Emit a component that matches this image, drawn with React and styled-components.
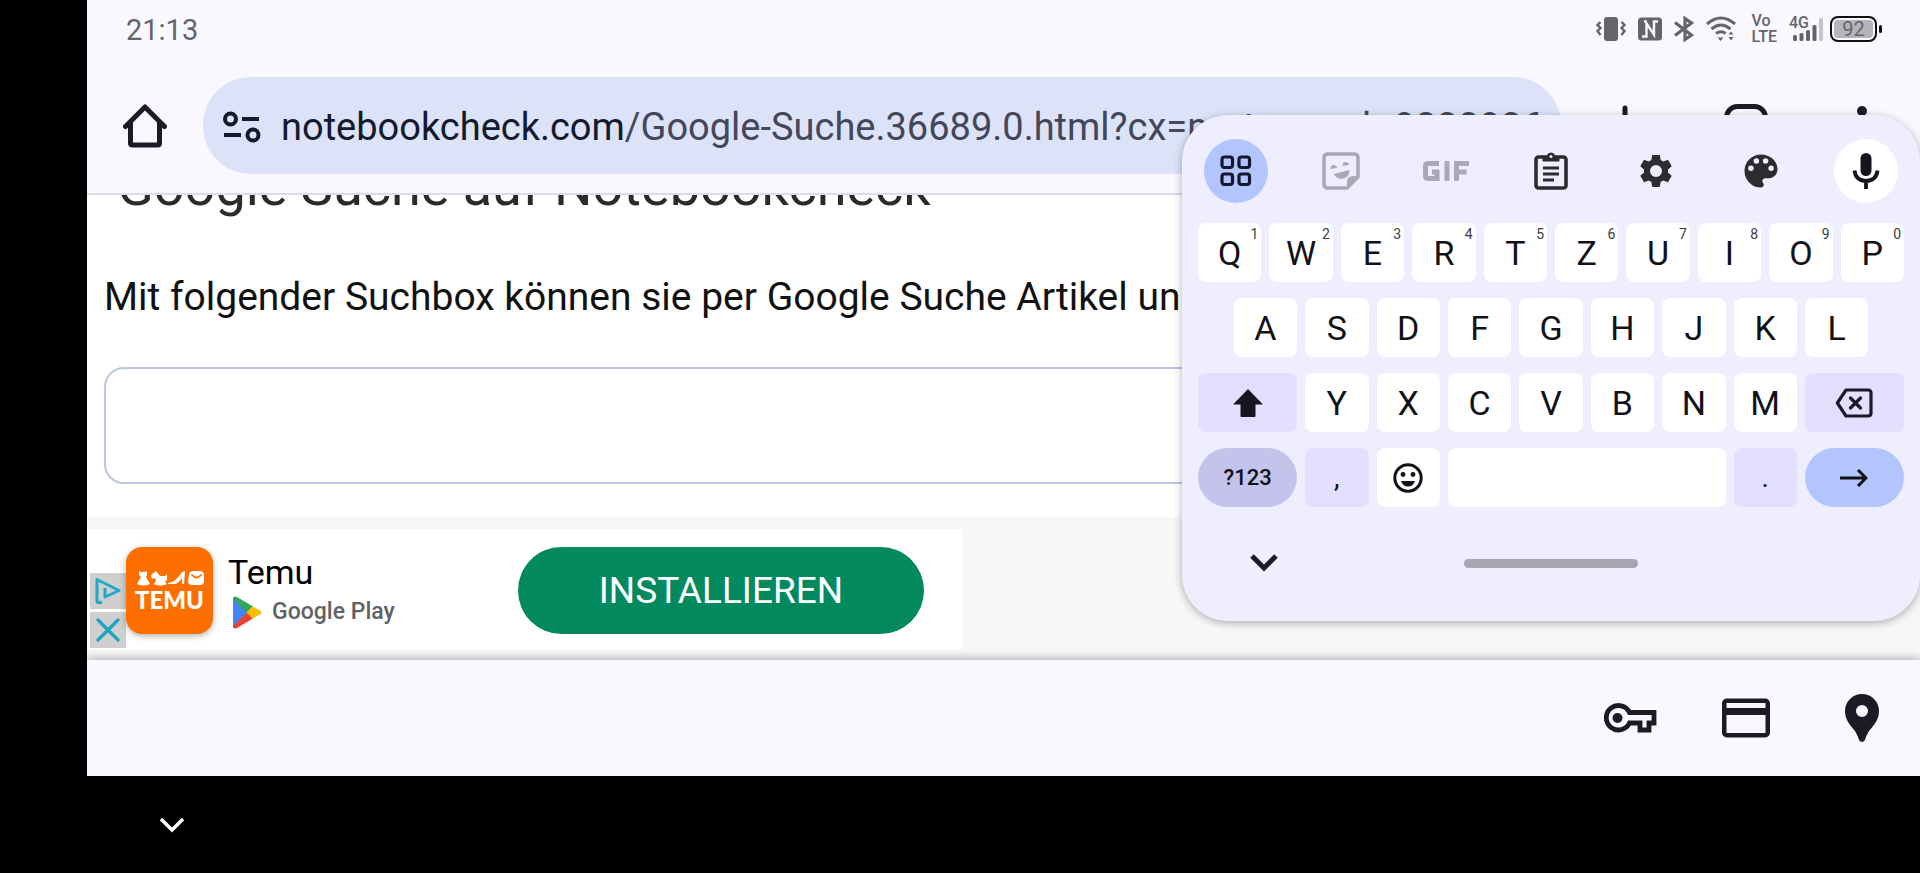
import React from 'react'
import styled, { createGlobalStyle } from 'styled-components'

const GlobalStyle = createGlobalStyle`
    * {
        box-sizing : border-box;
    }

    body {
        margin      : 0;
        background  : #000;
        color       : #1a1b22;
        font-family : Roboto, 'Liberation Sans', sans-serif;
    }

    button,
    input {
        margin      : 0;
        padding     : 0;
        border      : 0;
        background  : none;
        color       : inherit;
        font-family : inherit;
    }

    svg {
        display : block;
    }
`

/* ---------- status bar ---------- */

const StatusBar = () => (
    <Status>
        <time dateTime="21:13">21:13</time>
        <StatusIcons>
            <svg width="30" height="24" viewBox="0 0 30 24" fill="none" stroke="currentColor" strokeWidth="2.4">
                <rect x="8" y="0" width="14" height="24" rx="3" fill="currentColor" stroke="none" />
                <path d="M4.500 5 1.500 8l3 3-3 3 3 4M25.500 5l3 3-3 3 3 3-3 4" />
            </svg>
            <svg width="24" height="24" viewBox="0 0 24 24">
                <rect width="24" height="23" y="0.500" rx="3.500" fill="currentColor" />
                <path d="M4 19.500h4.500V6.500l7.500 11V4.500h4M6 4.500h3" fill="none" stroke="#f9f8ff" strokeWidth="2.400" />
            </svg>
            <svg width="20" height="26" viewBox="0 0 20 26" fill="none" stroke="currentColor" strokeWidth="3.200">
                <path d="M1 6.500 17.500 19l-6.500 4.500v-21L17.500 7 1 19.500" />
            </svg>
            <svg width="30" height="26" viewBox="0 0 30 26" fill="none" stroke="currentColor" strokeWidth="3">
                <path d="M1 8q14-12 28 0M5.500 13q9.500-8 19 0M10 17.500q5-3.500 9.500 0" />
                <path d="M11.500 21.500h6l-3 3.500zM22.500 18.500l2.500-3 2.500 3zM22.500 21h5l-2.500 3.500z" fill="currentColor" stroke="none" />
            </svg>
            <Volte>
                <span>Vo</span>
                <span>LTE</span>
            </Volte>
            <Signal>
                <span>4G</span>
                <svg width="34" height="26" viewBox="0 0 34 26" fill="currentColor">
                    <rect x="4" y="19" width="4" height="6" rx="1.500" />
                    <rect x="10.500" y="17" width="4" height="8" rx="1.500" />
                    <rect x="17" y="14" width="4" height="11" rx="1.500" />
                    <rect x="23.500" y="9" width="4" height="16" rx="1.500" />
                    <rect x="30" y="2" width="4" height="23" rx="1.500" opacity="0.350" />
                </svg>
            </Signal>
            <Battery>92</Battery>
        </StatusIcons>
    </Status>
)

/* ---------- browser toolbar ---------- */

const BrowserBar = () => (
    <Toolbar>
        <BarButton aria-label="Home">
            <svg width="44" height="44" viewBox="0 0 44 44" fill="none" stroke="currentColor" strokeWidth="5" strokeLinejoin="round" strokeLinecap="round">
                <path d="M2.500 22.500 22 3l19.500 19.500M7.500 19v20q0 2 2 2h25q2 0 2-2V19" />
            </svg>
        </BarButton>
        <Omnibox>
            <button aria-label="Site information">
                <svg width="38" height="32" viewBox="0 0 38 32" fill="none" stroke="currentColor" strokeWidth="4">
                    <circle cx="7.500" cy="8" r="5.500" />
                    <circle cx="30" cy="24" r="5.500" />
                    <path d="M19 8h17M1 24h17" />
                </svg>
            </button>
            <Address href="#page">
                <b>notebookcheck.com</b>/Google-Suche.36689.0.html?cx=partner-pub-9330936
            </Address>
        </Omnibox>
        <BarButton $wide aria-label="New tab">
            <svg width="42" height="42" viewBox="0 0 42 42" stroke="currentColor" strokeWidth="5" strokeLinecap="round">
                <path d="M21 3v36M3 21h36" />
            </svg>
        </BarButton>
        <BarButton aria-label="Tabs">
            <svg width="44" height="44" viewBox="0 0 44 44" fill="none" stroke="currentColor" strokeWidth="5">
                <rect x="2.500" y="2.500" width="39" height="39" rx="11" />
            </svg>
        </BarButton>
        <BarButton aria-label="Menu">
            <svg width="10" height="40" viewBox="0 0 10 40" fill="currentColor">
                <circle cx="5" cy="5" r="5" />
                <circle cx="5" cy="20" r="5" />
                <circle cx="5" cy="35" r="5" />
            </svg>
        </BarButton>
    </Toolbar>
)

/* ---------- ad banner ---------- */

const TemuLogo = () => (
    <TemuTile>
        <svg width="68" height="16" viewBox="0 0 68 16" fill="#fff">
            <path d="M3 1l2 1h4l2-1v4l-1 2 4 7q-7 3-13 0l4-7-2-2z" />
            <path d="M15 5l5-4 4 5h5l2-2v6l-2 2 2 2q-7 3-13 0l2-3-1-3-3 1z" />
            <path d="M32 13q7 0 14-11l3-1-1 13h-2V8q-4 6-8 6h-6z" />
            <path d="M53 5q0-4 5-4h5q5 0 5 4v6q0 4-4 4h-8q-4 0-4-4z" />
            <path d="M56 5q4.500 5 9 0" fill="none" stroke="#ff6f00" strokeWidth="1.800" strokeLinecap="round" />
        </svg>
        <span>TEMU</span>
    </TemuTile>
)

const PlayLogo = () => (
    <svg width="30" height="33" viewBox="0 0 30 33">
        <path d="M1 1.500v30L16 16.500z" fill="#4285f4" />
        <path d="M1 2Q2-.5 5 1l16 9.500-6 6L1 3z" fill="#34a853" />
        <path d="M1 31q1 2.500 4 1l16-9.500-6-6L1 30z" fill="#ea4335" />
        <path d="M20.500 10.300 28 14.500q3 2 0 4l-7.500 4.200-6-6.200z" fill="#fbbc04" />
    </svg>
)

const AdBanner = () => (
    <AdSlot>
        <Ad>
            <AdChoices>
                <button aria-label="AdChoices">
                    <svg width="28" height="30" viewBox="0 0 28 30" fill="none" stroke="#22a9c4" strokeWidth="3" strokeLinejoin="round">
                        <path d="M8 26q-5 2-5-1V3.500L25 14.500 11 21V12" />
                    </svg>
                </button>
                <button aria-label="Close ad">
                    <svg width="24" height="24" viewBox="0 0 24 24" stroke="#1ba6c2" strokeWidth="3.2" strokeLinecap="round">
                        <path d="M2 2l20 20M22 2 2 22" />
                    </svg>
                </button>
            </AdChoices>
            <TemuLogo />
            <AdText>
                <AdTitle>Temu</AdTitle>
                <AdStore>
                    <PlayLogo />
                    Google Play
                </AdStore>
            </AdText>
            <Install>INSTALLIEREN</Install>
        </Ad>
    </AdSlot>
)

/* ---------- keyboard ---------- */

const tools = [
    { name: 'Features', tone: 'accent', icon: (
        <svg width="32" height="32" viewBox="0 0 32 32" fill="none" stroke="#14182c" strokeWidth="3.200">
            <rect x="2" y="2" width="10.500" height="10.500" rx="2.500" />
            <rect x="19" y="2" width="10.500" height="10.500" rx="2.500" />
            <rect x="2" y="19" width="10.500" height="10.500" rx="2.500" />
            <rect x="19" y="19" width="10.500" height="10.500" rx="2.500" />
        </svg>
    ) },
    { name: 'Stickers', tone: 'muted', icon: (
        <svg width="38" height="38" viewBox="0 0 38 38" fill="currentColor">
            <path d="M6 2h26q4 0 4 4v19L25 36H6q-4 0-4-4V6q0-4 4-4z" fill="none" stroke="currentColor" strokeWidth="3.500" />
            <path d="M37 24h-6q-6 0-6 6v7z" />
            <path d="M8.500 17q0-4 3-4t3.500 3zM20.500 14q0-4 3-4t3.500 3zM11.500 22l16-4q0 7-6 8.500T11.500 22z" />
        </svg>
    ) },
    { name: 'GIF', tone: 'muted', icon: (
        <svg width="46" height="20" viewBox="0 0 46 20" fill="none" stroke="currentColor" strokeWidth="5">
            <path d="M16 2.500H5q-2.500 0-2.500 2.500v10q0 2.500 2.500 2.500h9V11H9M24 0v20M33.500 20V2.500H46M33 11h10.500" />
        </svg>
    ) },
    { name: 'Clipboard', icon: (
        <svg width="34" height="38" viewBox="0 0 34 38" fill="none" stroke="currentColor" strokeWidth="3.600">
            <rect x="2" y="5" width="30" height="31" rx="2.500" />
            <path d="M9 5q3 0 4-1 1-3 4-3t4 3q1 1 4 1v4H9zM17 2z" fill="currentColor" strokeWidth="1" />
            <path d="M9 16h16M9 22h16M9 28h11" strokeWidth="3" />
            <circle cx="17" cy="4.500" r="1.500" fill="#efedff" stroke="none" />
        </svg>
    ) },
    { name: 'Settings', icon: (
        <svg width="40" height="40" viewBox="0 0 24 24" fill="currentColor">
            <path d="M19.140 12.940c.04-.3.060-.61.060-.94 0-.32-.02-.64-.07-.94l2.030-1.580a.49.490 0 0 0 .12-.61l-1.920-3.320a.488.488 0 0 0-.59-.22l-2.390.96c-.5-.38-1.030-.7-1.620-.94l-.36-2.540a.484.484 0 0 0-.48-.41h-3.840c-.24 0-.43.170-.47.410l-.36 2.540c-.59.240-1.130.570-1.620.940l-2.390-.96c-.22-.08-.47 0-.59.220L2.740 8.870c-.12.210-.08.470.12.610l2.030 1.580c-.05.300-.09.630-.09.940s.02.640.070.940l-2.030 1.580a.49.490 0 0 0-.12.610l1.920 3.320c.12.220.37.290.59.220l2.390-.96c.5.380 1.030.7 1.620.940l.36 2.540c.05.240.24.410.48.410h3.840c.24 0 .44-.17.470-.41l.36-2.540c.59-.24 1.130-.56 1.620-.94l2.390.96c.22.080.47 0 .59-.22l1.920-3.320c.12-.22.070-.47-.12-.61l-2.010-1.580zM12 15.600A3.600 3.600 0 1 1 12 8.400a3.600 3.600 0 0 1 0 7.200z" />
        </svg>
    ) },
    { name: 'Theme', icon: (
        <svg width="44" height="44" viewBox="0 0 24 24" fill="currentColor">
            <path d="M12 3a9 9 0 0 0 0 18c.83 0 1.500-.67 1.500-1.500 0-.39-.15-.74-.39-1.010-.23-.26-.38-.61-.38-.99 0-.83.670-1.500 1.500-1.500H16c2.760 0 5-2.240 5-5 0-4.420-4.030-8-9-8zm-5.500 9a1.500 1.500 0 1 1 0-3 1.500 1.500 0 0 1 0 3zm3-4a1.500 1.500 0 1 1 0-3 1.500 1.500 0 0 1 0 3zm5 0a1.500 1.500 0 1 1 0-3 1.500 1.500 0 0 1 0 3zm3 4a1.500 1.500 0 1 1 0-3 1.500 1.500 0 0 1 0 3z" />
        </svg>
    ) },
    { name: 'Voice input', tone: 'light', icon: (
        <svg width="28" height="38" viewBox="0 0 28 38" fill="none" stroke="#14151f" strokeWidth="3.800">
            <rect x="8.500" y="1" width="11" height="23" rx="5.500" fill="#14151f" stroke="none" />
            <path d="M2.500 18.500q1 10 11.500 10.500 10.500-.5 11.500-10.500M14 29v8" />
        </svg>
    ) }
]

const topRow = ['Q', 'W', 'E', 'R', 'T', 'Z', 'U', 'I', 'O', 'P']
const homeRow = ['A', 'S', 'D', 'F', 'G', 'H', 'J', 'K', 'L']
const bottomRow = ['Y', 'X', 'C', 'V', 'B', 'N', 'M']

const Keyboard = () => (
    <Panel>
        <Tools>
            {tools.map(({ name, tone, icon }) => (
                <Tool key={name} $tone={tone} aria-label={name}>{icon}</Tool>
            ))}
        </Tools>
        <Keys>
            {topRow.map((letter, i) => (
                <Key key={letter}>
                    {letter}
                    <Hint>{(i + 1) % 10}</Hint>
                </Key>
            ))}
            {homeRow.map((letter, i) => (
                <Key key={letter} $start={i === 0 ? 2 : undefined}>{letter}</Key>
            ))}
            <Key $start={1} $span={3} $tone="soft" aria-label="Shift">
                <svg width="32" height="30" viewBox="0 0 32 30" fill="#14151f">
                    <path d="M16 1 31 16.500h-7.500V28q0 1-1 1h-13q-1 0-1-1V16.500H1z" />
                </svg>
            </Key>
            {bottomRow.map(letter => <Key key={letter}>{letter}</Key>)}
            <Key $span={3} $tone="soft" aria-label="Backspace">
                <svg width="38" height="30" viewBox="0 0 38 30" fill="none" stroke="#1b1a2c" strokeWidth="3.200" strokeLinejoin="round" strokeLinecap="round">
                    <path d="M11 2h22q3 0 3 3v20q0 3-3 3H11L3 16q-1-1 0-2zM15.500 10l10 10M25.500 10l-10 10" />
                </svg>
            </Key>
            <Key $span={3} $tone="symbols">?123</Key>
            <Key $tone="soft" $small>,</Key>
            <Key aria-label="Emoji">
                <svg width="30" height="30" viewBox="0 0 30 30" fill="currentColor">
                    <circle cx="15" cy="15" r="13.200" fill="none" stroke="currentColor" strokeWidth="3" />
                    <circle cx="10" cy="11.500" r="2.400" />
                    <circle cx="20" cy="11.500" r="2.400" />
                    <path d="M8 18h14q-2 5.500-7 5.500T8 18z" />
                </svg>
            </Key>
            <Key $span={8} aria-label="Space" />
            <Key $tone="soft" $small>.</Key>
            <Key $span={3} $tone="enter" aria-label="Enter">
                <svg width="28" height="18" viewBox="0 0 28 18" fill="none" stroke="currentColor" strokeWidth="3">
                    <path d="M0 9h25M18 1l8 8-8 8" />
                </svg>
            </Key>
        </Keys>
        <PanelFoot>
            <button aria-label="Hide keyboard">
                <svg width="28" height="18" viewBox="0 0 28 18" fill="none" stroke="#1b1b25" strokeWidth="5">
                    <path d="M2 2l12 12L26 2" />
                </svg>
            </button>
            <Handle />
        </PanelFoot>
    </Panel>
)

const AutofillBar = () => (
    <Autofill>
        <BarButton aria-label="Passwords">
            <svg width="54" height="30" viewBox="0 0 54 30" fill="none" stroke="currentColor" strokeWidth="4.800">
                <path d="M26.500 9.500A12.200 12.200 0 1 0 26.500 20H37v7h9v-7h5V9.500z" />
                <circle cx="14.500" cy="15" r="5" fill="currentColor" stroke="none" />
            </svg>
        </BarButton>
        <BarButton aria-label="Payment methods">
            <svg width="48" height="40" viewBox="0 0 48 40" fill="none" stroke="currentColor" strokeWidth="4.500">
                <rect x="2.250" y="2.750" width="43.500" height="34.500" rx="2.500" />
                <path d="M2 13.500h44" strokeWidth="7" />
            </svg>
        </BarButton>
        <BarButton aria-label="Addresses">
            <svg width="34" height="48" viewBox="0 0 34 48" fill="currentColor" fillRule="evenodd">
                <path d="M17 0a17 17 0 0 1 17 17c0 8-4 13-10 20q-3 5-4 9-3 4-6 0-1-4-4-9C4 30 0 25 0 17A17 17 0 0 1 17 0zm0 11a6 6 0 1 0 0 12 6 6 0 0 0 0-12z" />
            </svg>
        </BarButton>
    </Autofill>
)

const App = () => (
    <Device>
        <GlobalStyle />
        <Screen>
            <Header>
                <StatusBar />
                <BrowserBar />
            </Header>
            <Page id="page">
                <Heading>Google Suche auf Notebookcheck</Heading>
                <Intro htmlFor="search">Mit folgender Suchbox können sie per Google Suche Artikel und</Intro>
                <SearchInput id="search" type="text" />
                <AdBanner />
            </Page>
            <AutofillBar />
        </Screen>
        <SystemNav>
            <button aria-label="Back">
                <svg width="26" height="16" viewBox="0 0 26 16" fill="none" stroke="#fff" strokeWidth="3.500">
                    <path d="M2 2l11 11L24 2" />
                </svg>
            </button>
        </SystemNav>
        <Keyboard />
    </Device>
)

export default App

const Device = styled.div`
    position       : relative;
    display        : flex;
    flex-direction : column;
    height         : 100vh;
    overflow       : hidden;
`

const Screen = styled.main`
    display        : flex;
    flex-direction : column;
    flex           : 1;
    min-height     : 0;
    margin-left    : 87px;
    background     : #fff;
`

const Header = styled.header`
    flex          : none;
    background    : #f9f8ff;
    border-bottom : 2px solid #dddce6;
`

const Status = styled.div`
    display         : flex;
    align-items     : center;
    justify-content : space-between;
    height          : 60px;
    padding         : 0 38px 0 39px;
    color           : #65646b;
    font-size       : 29px;
`

const StatusIcons = styled.div`
    display        : flex;
    align-items    : center;
    gap            : 12px;
    padding-bottom : 2px;
`

const Volte = styled.div`
    display        : flex;
    flex-direction : column;
    padding-left   : 4px;
    font-size      : 16px;
    font-weight    : 500;
    line-height    : 16px;
`

const Signal = styled.div`
    position     : relative;
    margin-right : -5px;

    span {
        position    : absolute;
        top         : 0;
        left        : 0;
        font-size   : 16px;
        font-weight : 500;
        line-height : 14px;
    }
`

const Battery = styled.div`
    position      : relative;
    width         : 47px;
    margin-right  : 5px;
    border        : 2px solid #111;
    border-radius : 8px;
    background    : #b5b4bb;
    box-shadow    : inset 0 0 0 2px #f9f8ff;
    font-size     : 20px;
    line-height   : 22px;
    text-align    : center;

    &::after {
        content       : '';
        position      : absolute;
        top           : 7px;
        right         : -7px;
        width         : 3px;
        height        : 8px;
        border-radius : 2px;
        background    : #111;
    }
`

const Toolbar = styled.nav`
    display     : flex;
    align-items : center;
    padding     : 17px 0 19px;
`

const BarButton = styled.button`
    display         : flex;
    flex            : none;
    align-items     : center;
    justify-content : center;
    width           : ${({ $wide }) => $wide ? '127px' : '116px'};
    color           : #1a1b26;
`

const Omnibox = styled.div`
    display       : flex;
    flex          : 1;
    align-items   : center;
    gap           : 20px;
    min-width     : 0;
    height        : 97px;
    padding       : 3px 16px 0 20px;
    border-radius : 48px;
    background    : #dce3f8;
    color         : #141a2e;
`

const Address = styled.a`
    flex            : 1;
    overflow        : hidden;
    color           : #44475a;
    font-size       : 38px;
    line-height     : 48px;
    white-space     : nowrap;
    text-decoration : none;

    b {
        color       : #141a2e;
        font-weight : 400;
    }
`

/* scrolled view: content sits on the bottom edge and is cut off at the top */
const Page = styled.section`
    display         : flex;
    flex            : 1;
    flex-direction  : column;
    justify-content : flex-end;
    min-height      : 0;
    overflow        : hidden;
`

const Heading = styled.h1`
    flex        : none;
    margin      : 0 0 56px 30px;
    color       : #2b2b2b;
    font-size   : 54px;
    font-weight : 400;
    line-height : 60px;
    white-space : nowrap;
`

const Intro = styled.label`
    flex        : none;
    margin      : 0 0 46px 17px;
    color       : #111;
    font-size   : 39px;
    line-height : 48px;
    white-space : nowrap;
`

const SearchInput = styled.input`
    flex          : none;
    height        : 117px;
    margin        : 0 17px 33px;
    padding       : 0 24px;
    border        : 2px solid #bcc6de;
    border-radius : 20px;
    background    : #fff;
    font-size     : 38px;
`

const AdSlot = styled.aside`
    flex        : none;
    padding     : 12px 0 10px;
    background  : #f7f7f7;
`

const Ad = styled.div`
    display     : flex;
    align-items : center;
    width       : 875px;
    height      : 121px;
    padding     : 2px 38px 0 3px;
    background  : #fff;
`

const AdChoices = styled.div`
    display        : flex;
    flex-direction : column;
    align-self     : flex-end;
    gap            : 3px;
    padding-bottom : 2px;

    button {
        display         : flex;
        align-items     : center;
        justify-content : center;
        width           : 36px;
        height          : 36px;
        background      : #cfcfcf;
    }
`

const TemuTile = styled.div`
    display         : flex;
    flex-direction  : column;
    align-items     : center;
    justify-content : center;
    gap             : 2px;
    width           : 87px;
    height          : 87px;
    border-radius   : 16px;
    background      : #ff6f00;
    box-shadow      : 0 2px 6px rgba(0, 0, 0, 0.3);
    color           : #fff;
    font-family     : Lato, sans-serif;
    font-size       : 24px;
    font-weight     : 900;
    line-height     : 24px;
`

const AdText = styled.div`
    display        : flex;
    flex-direction : column;
    flex           : 1;
    gap            : 5px;
    padding-left   : 15px;
`

const AdTitle = styled.strong`
    color       : #000;
    font-size   : 34px;
    font-weight : 400;
    line-height : 38px;
`

const AdStore = styled.span`
    display      : flex;
    align-items  : center;
    gap          : 10px;
    padding-left : 4px;
    color        : #5f6368;
    font-family  : Roboto, sans-serif;
    font-size    : 23px;
    font-weight  : 500;
    line-height  : 32px;
`

const Install = styled.button`
    width         : 406px;
    height        : 87px;
    border-radius : 44px;
    background    : #03895e;
    color         : #fff;
    font-size     : 37px;
`

const Autofill = styled.footer`
    position        : relative;
    display         : flex;
    flex            : none;
    justify-content : flex-end;
    height          : 116px;
    background      : #f9f8ff;
    box-shadow      : 0 0 10px rgba(0, 0, 0, 0.4);
`

const SystemNav = styled.nav`
    display     : flex;
    flex        : none;
    align-items : center;
    height      : 97px;
    padding     : 0 159px;
    background  : #000;
    z-index     : 1;
`

/* floats over the page, so it is taken out of the flow */
const Panel = styled.section`
    position       : absolute;
    top            : 115px;
    right          : 0;
    z-index        : 2;
    display        : flex;
    flex-direction : column;
    width          : 738px;
    border-radius  : 46px;
    background     : #efeefe;
    box-shadow     : 0 2px 8px rgba(0, 0, 0, 0.3);
`

const Tools = styled.div`
    display         : flex;
    justify-content : space-between;
    padding         : 24px 22px 20px;
`

const toolColors = {
    accent : '#b3c5ff',
    light  : '#fff'
}

const Tool = styled.button`
    display         : flex;
    align-items     : center;
    justify-content : center;
    width           : 64px;
    height          : 64px;
    border-radius   : 50%;
    background      : ${({ $tone }) => toolColors[$tone] || 'none'};
    color           : ${({ $tone }) => $tone === 'muted' ? '#a9a8b5' : '#2b2b30'};
`

const Keys = styled.div`
    display               : grid;
    grid-template-columns : repeat(20, 1fr);
    grid-auto-rows        : 59px;
    column-gap            : 8px;
    row-gap               : 16px;
    padding               : 0 16px;
`

const keyColors = {
    soft    : '#e2dfff',
    symbols : '#c4c3eb',
    enter   : '#b3c5ff'
}

const Key = styled.button`
    position        : relative;
    display         : flex;
    align-items     : center;
    justify-content : center;
    grid-column     : ${({ $start = 'auto', $span = 2 }) => `${$start} / span ${$span}`};
    border-radius   : ${({ $tone }) => $tone === 'symbols' || $tone === 'enter' ? '30px' : '8px'};
    background      : ${({ $tone }) => keyColors[$tone] || '#fff'};
    color           : #111218;
    font-size       : ${({ $tone, $small }) => $tone === 'symbols' ? '22px' : $small ? '28px' : '34px'};
    font-weight     : ${({ $tone }) => $tone === 'symbols' ? 500 : 400};
`

const Hint = styled.span`
    position    : absolute;
    top         : 3px;
    right       : 3px;
    color       : #3c3c43;
    font-size   : 14px;
    line-height : 16px;
`

const PanelFoot = styled.div`
    display               : grid;
    grid-template-columns : 1fr auto 1fr;
    align-items           : center;
    height                : 114px;
    padding               : 0 68px 2px;
`

const Handle = styled.div`
    width         : 174px;
    height        : 9px;
    border-radius : 5px;
    background    : #a7a6b2;
`
